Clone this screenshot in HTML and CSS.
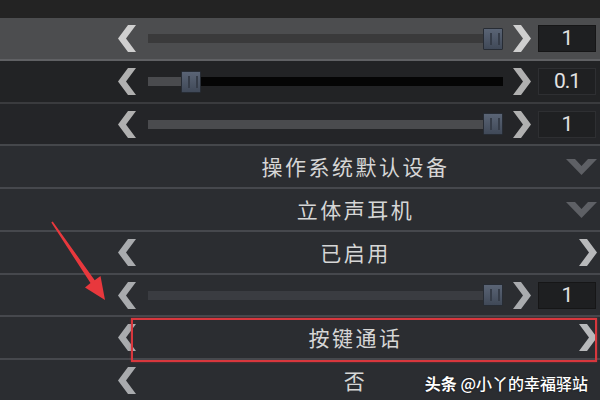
FILE: index.html
```html
<!DOCTYPE html>
<html lang="zh-CN">
<head>
    <meta charset="UTF-8">
    <meta name="viewport" content="width=device-width, initial-scale=1.0">
    <title>音频设置</title>
    <link rel="stylesheet" href="styles.css">
</head>
<body>
    <div class="panel">
        <div class="strip"></div>

        <!-- 主音量 -->
        <div class="row slider-row is-active">
            <svg class="chev" viewBox="0 0 18 27"><polygon points="10,0 18,0 8,13.5 18,27 10,27 0,13.5"/></svg>
            <div class="track">
                <span class="fill" style="width:335px"></span>
                <span class="thumb"></span>
                <span class="rest"></span>
            </div>
            <svg class="chev chev-right" viewBox="0 0 18 27"><polygon points="0,0 8,0 18,13.5 8,27 0,27 10,13.5"/></svg>
            <div class="value">1</div>
        </div>

        <div class="row slider-row row-dark">
            <svg class="chev" viewBox="0 0 18 27"><polygon points="10,0 18,0 8,13.5 18,27 10,27 0,13.5"/></svg>
            <div class="track">
                <span class="fill" style="width:33px"></span>
                <span class="thumb"></span>
                <span class="rest"></span>
            </div>
            <svg class="chev chev-right" viewBox="0 0 18 27"><polygon points="0,0 8,0 18,13.5 8,27 0,27 10,13.5"/></svg>
            <div class="value">0.1</div>
        </div>

        <div class="row slider-row row-dark row-dark-2">
            <svg class="chev" viewBox="0 0 18 27"><polygon points="10,0 18,0 8,13.5 18,27 10,27 0,13.5"/></svg>
            <div class="track">
                <span class="fill" style="width:335px"></span>
                <span class="thumb"></span>
                <span class="rest"></span>
            </div>
            <svg class="chev chev-right" viewBox="0 0 18 27"><polygon points="0,0 8,0 18,13.5 8,27 0,27 10,13.5"/></svg>
            <div class="value">1</div>
        </div>

        <!-- 设备选择 -->
        <div class="row select-row">
            <span class="slot"></span>
            <span class="label">操作系统默认设备</span>
            <span class="slot slot-right">
                <svg class="drop" viewBox="0 0 31 16"><polygon points="0,0 9,0 15.5,7 22,0 31,0 15.5,16"/></svg>
            </span>
        </div>

        <div class="row select-row">
            <span class="slot"></span>
            <span class="label">立体声耳机</span>
            <span class="slot slot-right">
                <svg class="drop" viewBox="0 0 31 16"><polygon points="0,0 9,0 15.5,7 22,0 31,0 15.5,16"/></svg>
            </span>
        </div>

        <div class="row select-row">
            <svg class="chev" viewBox="0 0 18 27"><polygon points="10,0 18,0 8,13.5 18,27 10,27 0,13.5"/></svg>
            <span class="label">已启用</span>
            <span class="slot slot-right">
                <svg class="chev" viewBox="0 0 18 27"><polygon points="0,0 8,0 18,13.5 8,27 0,27 10,13.5"/></svg>
            </span>
        </div>

        <div class="row slider-row">
            <svg class="chev" viewBox="0 0 18 27"><polygon points="10,0 18,0 8,13.5 18,27 10,27 0,13.5"/></svg>
            <div class="track track-faint">
                <span class="fill" style="width:335px"></span>
                <span class="thumb"></span>
                <span class="rest"></span>
            </div>
            <svg class="chev chev-right" viewBox="0 0 18 27"><polygon points="0,0 8,0 18,13.5 8,27 0,27 10,13.5"/></svg>
            <div class="value">1</div>
        </div>

        <div class="row select-row is-marked">
            <svg class="chev" viewBox="0 0 18 27"><polygon points="10,0 18,0 8,13.5 18,27 10,27 0,13.5"/></svg>
            <span class="label">按键通话</span>
            <span class="slot slot-right">
                <svg class="chev" viewBox="0 0 18 27"><polygon points="0,0 8,0 18,13.5 8,27 0,27 10,13.5"/></svg>
            </span>
            <span class="mark"></span>
        </div>

        <div class="row select-row row-last">
            <svg class="chev" viewBox="0 0 18 27"><polygon points="10,0 18,0 8,13.5 18,27 10,27 0,13.5"/></svg>
            <span class="label">否</span>
            <span class="slot slot-right"></span>
        </div>

        <!-- 标注箭头 -->
        <svg class="arrow" viewBox="0 0 600 400">
            <polygon points="52.7,221.5 94.7,280.3 100.5,276 105,300 85,287.5 90.5,283.1 51.3,222.5"/>
        </svg>

        <div class="watermark"><b>头条</b> @小丫的幸福驿站</div>
    </div>
</body>
</html>
```

FILE: styles.css
```css
* {
    margin: 0;
    padding: 0;
    box-sizing: border-box;
}

body {
    font-family: 'Noto Sans CJK SC', 'Noto Sans', sans-serif;
    background: #2b2d31;
    overflow: hidden;
}

.panel {
    position: relative;
    width: 600px;
    height: 400px;
    display: grid;
    grid-template-rows: 18px 43px 43px 42px 43px 43px 43px 42px 43px 1fr;
    background: #2b2d31;
}

.strip {
    background: #232323;
}

.row {
    display: flex;
    align-items: center;
    padding-left: 118px;
    border-bottom: 2px solid #46484d;
    color: #a9abae;
}

.row.is-active {
    background: #4c4d4f;
    border-bottom-color: #606164;
    color: #cfcfcf;
}

.row-dark {
    background: #222325;
    border-bottom-color: #3a3b3e;
    color: #b0b0b0;
}

.row-dark-2 {
    background: #242528;
    border-bottom-color: #45474b;
}

.row-last {
    border-bottom: none;
}

.chev {
    width: 18px;
    height: 27px;
    flex-shrink: 0;
    fill: currentColor;
}

.chev-right {
    margin-left: 10px;
}

/* 滑块 */
.track {
    flex: 1;
    margin-left: 12px;
    display: flex;
    align-items: center;
    height: 22px;
}

.track .fill {
    height: 9px;
    background: #4a4b4e;
}

.is-active .track .fill {
    background: #3a3a3b;
}

.track .rest {
    flex: 1;
    height: 9px;
    background: #050505;
}

.track-faint .fill {
    background: #3a3c41;
}

.thumb {
    position: relative;
    width: 20px;
    height: 22px;
    flex-shrink: 0;
    background: linear-gradient(#5a6475, #404958);
    border: 1px solid #272c34;
    border-radius: 1px;
}

.thumb::after {
    content: '';
    position: absolute;
    left: 6px;
    top: 4px;
    width: 6px;
    height: 12px;
    border-left: 2px solid #353c48;
    border-right: 2px solid #353c48;
}

.value {
    width: 58px;
    height: 27px;
    margin-left: 7px;
    margin-right: 5px;
    background: #1e1f21;
    border: 1px solid #161617;
    color: #e2e2e2;
    font-family: 'Roboto', sans-serif;
    font-size: 21px;
    letter-spacing: -1px;
    line-height: 25px;
    text-align: center;
}

.row-dark .value {
    background: #1f2022;
    border-color: #2e2f32;
}

/* 选项行 */
.slot {
    width: 18px;
    flex-shrink: 0;
}

.slot-right {
    width: 22px;
    margin-right: 4px;
    display: flex;
    justify-content: flex-end;
    align-items: center;
}

.label {
    flex: 1;
    text-align: center;
    color: #d6d6d6;
    font-size: 21px;
    letter-spacing: 2.5px;
    line-height: 1;
}

.drop {
    width: 31px;
    height: 16px;
    flex-shrink: 0;
    fill: #5e6065;
}

.select-row .slot-right .chev {
    color: #b8b9bb;
}

.is-marked {
    position: relative;
}

.mark {
    position: absolute;
    left: 131px;
    right: 4px;
    top: 1px;
    height: 44px;
    border: 2px solid #d8373d;
    box-shadow: 0 0 2px rgba(216, 55, 61, 0.5);
    pointer-events: none;
}

.arrow {
    position: absolute;
    left: 0;
    top: 0;
    width: 600px;
    height: 400px;
    fill: #e8383d;
    pointer-events: none;
}

.watermark {
    position: absolute;
    right: 12px;
    bottom: 9px;
    color: #ffffff;
    font-size: 16px;
    font-weight: 500;
    line-height: 1;
    text-shadow: 0 0 2px rgba(0, 0, 0, 0.7);
}

.watermark b {
    font-weight: 700;
}
```
